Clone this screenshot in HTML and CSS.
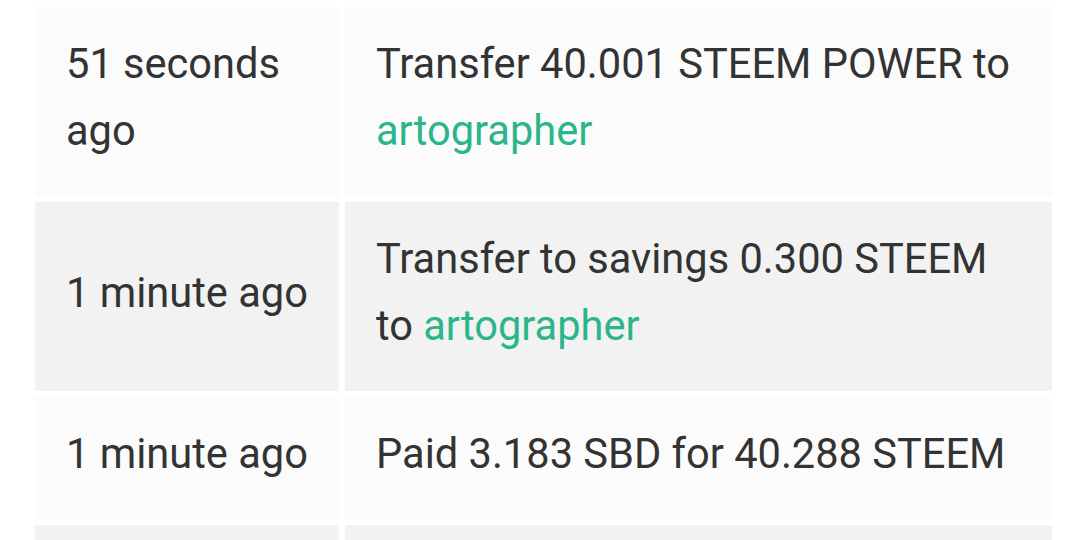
FILE: index.html
```html
<!DOCTYPE html>
<html lang="en">
<head>
  <meta charset="UTF-8" />
  <meta name="viewport" content="width=device-width, initial-scale=1.0"/>
  <title>Wallet history</title>
  <link rel="stylesheet" href="styles.css">
</head>
<body>
  <table class="history">
    <colgroup>
      <col class="col-time">
      <col class="col-desc">
    </colgroup>
    <tbody>
      <tr>
        <td>51 seconds ago</td>
        <td>Transfer 40.001 STEEM POWER to <a href="#">artographer</a></td>
      </tr>
      <tr>
        <td>1 minute ago</td>
        <td>Transfer to savings 0.300 STEEM to <a href="#">artographer</a></td>
      </tr>
      <tr>
        <td>1 minute ago</td>
        <td>Paid 3.183 SBD for 40.288 STEEM</td>
      </tr>
      <tr>
        <td>&nbsp;</td>
        <td>&nbsp;</td>
      </tr>
    </tbody>
  </table>
</body>
</html>
```

FILE: styles.css
```css
body {
  margin: 0;
  background: #fff;
  font-family: Roboto, "Noto Sans", sans-serif;
  color: #333;
  overflow: hidden;
}

.history {
  margin: 1px 0 0 29px;
  border-collapse: separate;
  border-spacing: 6px;
  table-layout: fixed;
  width: 1029px;
}

.col-time {
  width: 304px;
}

.history td {
  padding: 23px 20px 32px 31px;
  font-size: 41.6px;
  line-height: 67px;
  vertical-align: middle;
  background: #fbfbfb;
}

.history tr:nth-child(even) td {
  background: #f2f2f2;
}

.history a {
  color: #2bb58b;
  text-decoration: none;
}
```
